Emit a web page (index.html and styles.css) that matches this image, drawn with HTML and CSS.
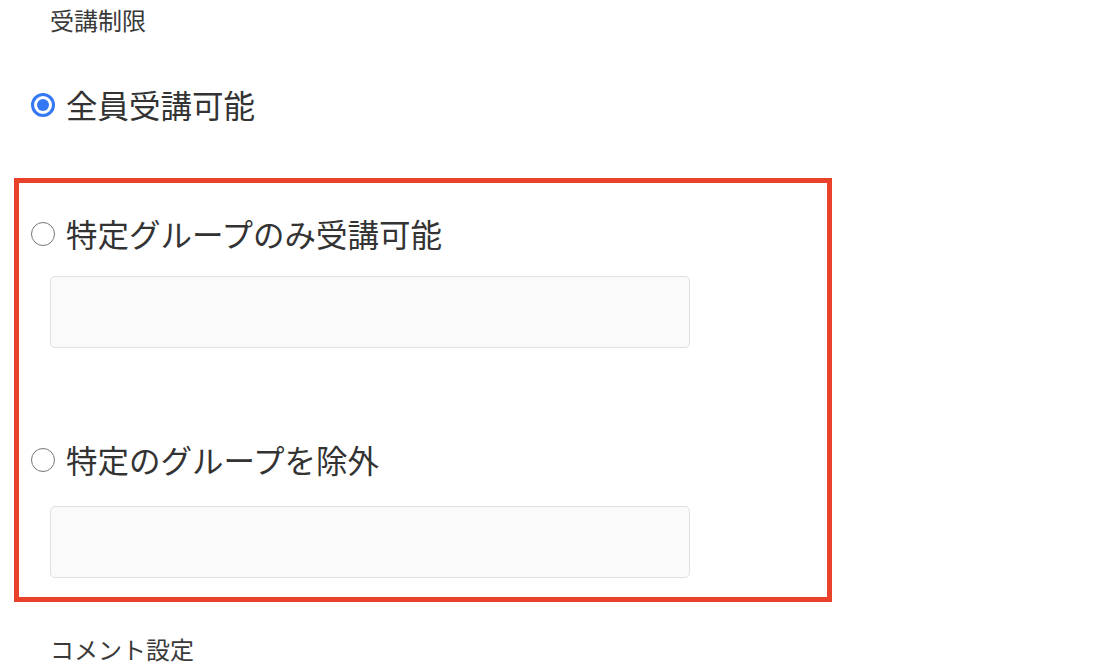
FILE: index.html
```html
<!DOCTYPE html>
<html lang="ja">
<head>
<meta charset="utf-8">
<title>受講制限</title>
<link rel="stylesheet" href="styles.css">
</head>
<body>
<div class="page">
  <div class="section-title">受講制限</div>
  <label class="option option--outer">
    <span class="radio radio--checked"></span>
    <span class="option-label">全員受講可能</span>
  </label>
  <div class="restrict-box">
    <label class="option option--inner option--first">
      <span class="radio"></span>
      <span class="option-label">特定グループのみ受講可能</span>
    </label>
    <div class="field field--first"></div>
    <label class="option option--inner option--second">
      <span class="radio"></span>
      <span class="option-label">特定のグループを除外</span>
    </label>
    <div class="field field--second"></div>
  </div>
  <div class="section-title section-title--after">コメント設定</div>
</div>
</body>
</html>
```
FILE: styles.css
```css
html, body {
  margin: 0;
  padding: 0;
  background: #ffffff;
}
body {
  font-family: "Noto Sans CJK JP", "Noto Sans", sans-serif;
  color: #333333;
}
.page {
  width: 1104px;
  height: 668px;
  overflow: hidden;
}
.section-title {
  padding-left: 50px;
  font-size: 24px;
  line-height: 40px;
  height: 40px;
  color: #3a3a3a;
}
.section-title--after {
  margin-top: 27px;
}
.option {
  display: flex;
  align-items: center;
  height: 40px;
  gap: 11px;
}
.option--outer {
  margin-top: 45px;
  padding-left: 31px;
}
.option--inner {
  padding-left: 12px;
}
.option--first {
  margin-top: 0;
}
.option--second {
  margin-top: 92px;
}
.option-label {
  font-size: 31.5px;
  line-height: 40px;
  padding-bottom: 3px;
  color: #333333;
}
.radio {
  width: 24px;
  height: 24px;
  box-sizing: border-box;
  border-radius: 50%;
  border: 1.6px solid #767676;
  background: #ffffff;
  flex: none;
}
.radio--checked {
  border: 3px solid #3478f6;
  position: relative;
}
.radio--checked::after {
  content: "";
  position: absolute;
  left: 3px;
  top: 3px;
  width: 12px;
  height: 12px;
  border-radius: 50%;
  background: #3478f6;
}
.restrict-box {
  margin-top: 53px;
  margin-left: 14px;
  width: 818px;
  box-sizing: border-box;
  border: 5px solid #e9412a;
  padding: 31px 0 19px 0;
}
.field {
  margin-left: 31px;
  width: 640px;
  height: 72px;
  box-sizing: border-box;
  border: 1.5px solid #e0e0e0;
  border-radius: 5px;
  background: #fafafa;
}
.field--first {
  margin-top: 22px;
}
.field--second {
  margin-top: 26px;
}
```
